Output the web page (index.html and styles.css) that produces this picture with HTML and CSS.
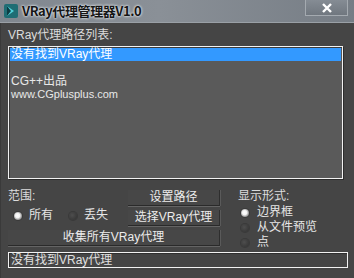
FILE: index.html
```html
<!DOCTYPE html>
<html>
<head>
<meta charset="utf-8">
<link rel="stylesheet" href="styles.css">
</head>
<body>
<div class="window">
  <div class="titlebar">
    <svg class="appicon" width="14" height="14" viewBox="0 0 14 14">
      <rect x="0" y="0" width="14" height="14" rx="2" fill="#1f6d74"/>
      <path d="M3 2 L10 7 L3 12 Z" fill="#4fd1d9"/>
      <path d="M3 2 L7 7 L3 12 Z" fill="#0d3d44"/>
    </svg>
    <span class="title">VRay代理管理器V1.0</span>
    <div class="close">
      <svg width="12" height="10" viewBox="0 0 12 10"><path d="M2 1 L10 9 M10 1 L2 9" stroke="#fff" stroke-width="2.4"/></svg>
    </div>
  </div>
  <div class="body">
    <div class="label">VRay代理路径列表:</div>
    <div class="listbox">
      <div class="item selected">没有找到VRay代理</div>
      <div class="item credit">CG++出品</div>
      <div class="item small">www.CGplusplus.com</div>
    </div>
    <div class="controls">
      <div class="left">
        <div class="row-top">
          <div class="range">
            <div class="label">范围:</div>
            <div class="radios">
              <label class="radio"><span class="dot on"></span>所有</label>
              <label class="radio"><span class="dot"></span>丢失</label>
            </div>
          </div>
          <div class="btns">
            <div class="btn">设置路径</div>
            <div class="btn">选择VRay代理</div>
          </div>
        </div>
        <div class="btn">收集所有VRay代理</div>
      </div>
      <div class="right">
        <div class="label">显示形式:</div>
        <label class="radio"><span class="dot on"></span>边界框</label>
        <label class="radio"><span class="dot"></span>从文件预览</label>
        <label class="radio"><span class="dot"></span>点</label>
      </div>
    </div>
    <div class="status">没有找到VRay代理</div>
  </div>
</div>
</body>
</html>
```
FILE: styles.css
```css
html, body {
  margin: 0;
  padding: 0;
  background: #454545;
}
.window {
  width: 354px;
  height: 278px;
  overflow: hidden;
  font-family: "Liberation Sans", "Noto Sans CJK SC", sans-serif;
  font-size: 12px;
  color: #e0e0e0;
  background: #454545;
  display: flex;
  flex-direction: column;
}
.titlebar {
  height: 22px;
  flex: none;
  display: flex;
  align-items: center;
  background: linear-gradient(90deg, #80878f 0%, #8a9097 45%, #767d85 100%);
  border-bottom: 1px solid #9aa0a6;
  position: relative;
}
.appicon {
  margin-left: 4px;
  margin-right: 4px;
  flex: none;
}
.title {
  font-family: "Noto Sans CJK SC", sans-serif;
  font-weight: bold;
  font-size: 13px;
  line-height: 16px;
  color: #161616;
  text-shadow: 0 0 3px #e8eef2, 0 0 2px #e8eef2;
  letter-spacing: -0.4px;
}
.close {
  position: absolute;
  right: 6px;
  top: 0;
  width: 43px;
  height: 16px;
  box-sizing: border-box;
  border: 1px solid #a4aab0;
  border-top: none;
  background: linear-gradient(#858c94, #70777f);
  display: flex;
  align-items: center;
  justify-content: center;
}
.body {
  flex: 1;
  display: flex;
  flex-direction: column;
  padding: 6px 6px 0 7px;
  border-left: 1px solid #3a3a3a;
}
.label {
  line-height: 13px;
  height: 13px;
  color: #dcdcdc;
  font-size: 12px;
  white-space: nowrap;
}
.listbox {
  margin-top: 4px;
  margin-right: 5px;
  height: 133px;
  flex: none;
  box-sizing: border-box;
  border: 1px solid #f2f2f2;
  box-shadow: 1px 1px 0 #2c2c2c, inset 1px 1px 0 #3c3c3c;
  background: #5a5a5a;
  padding: 1px 1px 0 1px;
}
.item {
  height: 13px;
  line-height: 13px;
  padding-left: 1px;
  color: #e8e8e8;
  white-space: nowrap;
}
.item.selected {
  background: #3399ff;
  color: #ffffff;
}
.item.credit {
  margin-top: 14px;
}
.item.small {
  font-size: 11px;
}
.controls {
  height: 73px;
  flex: none;
  box-sizing: border-box;
  padding-top: 11px;
  display: flex;
}
.left {
  width: 212px;
  display: flex;
  flex-direction: column;
  gap: 4px;
}
.row-top {
  display: flex;
  justify-content: space-between;
}
.range {
  display: flex;
  flex-direction: column;
}
.radios {
  display: flex;
  gap: 16px;
  margin-top: 5px;
  padding-left: 6px;
}
.radio {
  display: flex;
  align-items: center;
  gap: 7px;
  height: 15px;
  line-height: 15px;
  color: #e6e6e6;
  font-size: 12px;
  white-space: nowrap;
}
.dot {
  width: 8px;
  height: 8px;
  border-radius: 50%;
  background: radial-gradient(circle at 40% 40%, #4e4e4e 0%, #363636 80%);
  box-shadow: 0 0 0 1px #3a3a3a;
  flex: none;
}
.dot.on {
  background: radial-gradient(circle at 45% 45%, #ffffff 0%, #f4f4f4 35%, #9a9a9a 65%, #404040 100%);
}
.btns {
  display: flex;
  flex-direction: column;
  gap: 4px;
  width: 92px;
}
.btn {
  height: 15px;
  line-height: 15px;
  text-align: center;
  color: #ececec;
  background: #474747;
  border-right: 1px solid #2e2e2e;
  border-bottom: 1px solid #2a2a2a;
  box-shadow: 0 1px 0 #646464, 1px 0 0 #5a5a5a;
  white-space: nowrap;
}
.right {
  margin-left: 18px;
  display: flex;
  flex-direction: column;
}
.right .label {
  margin-bottom: 2px;
}
.right .radio {
  padding-left: 3px;
  gap: 8px;
}
.status {
  height: 16px;
  flex: none;
  line-height: 14px;
  box-sizing: border-box;
  border: 1px solid #f2f2f2;
  box-shadow: inset 1px 1px 0 #2f2f2f;
  background: #454545;
  padding-left: 2px;
  color: #e0e0e0;
  font-size: 12px;
  white-space: nowrap;
}
```
